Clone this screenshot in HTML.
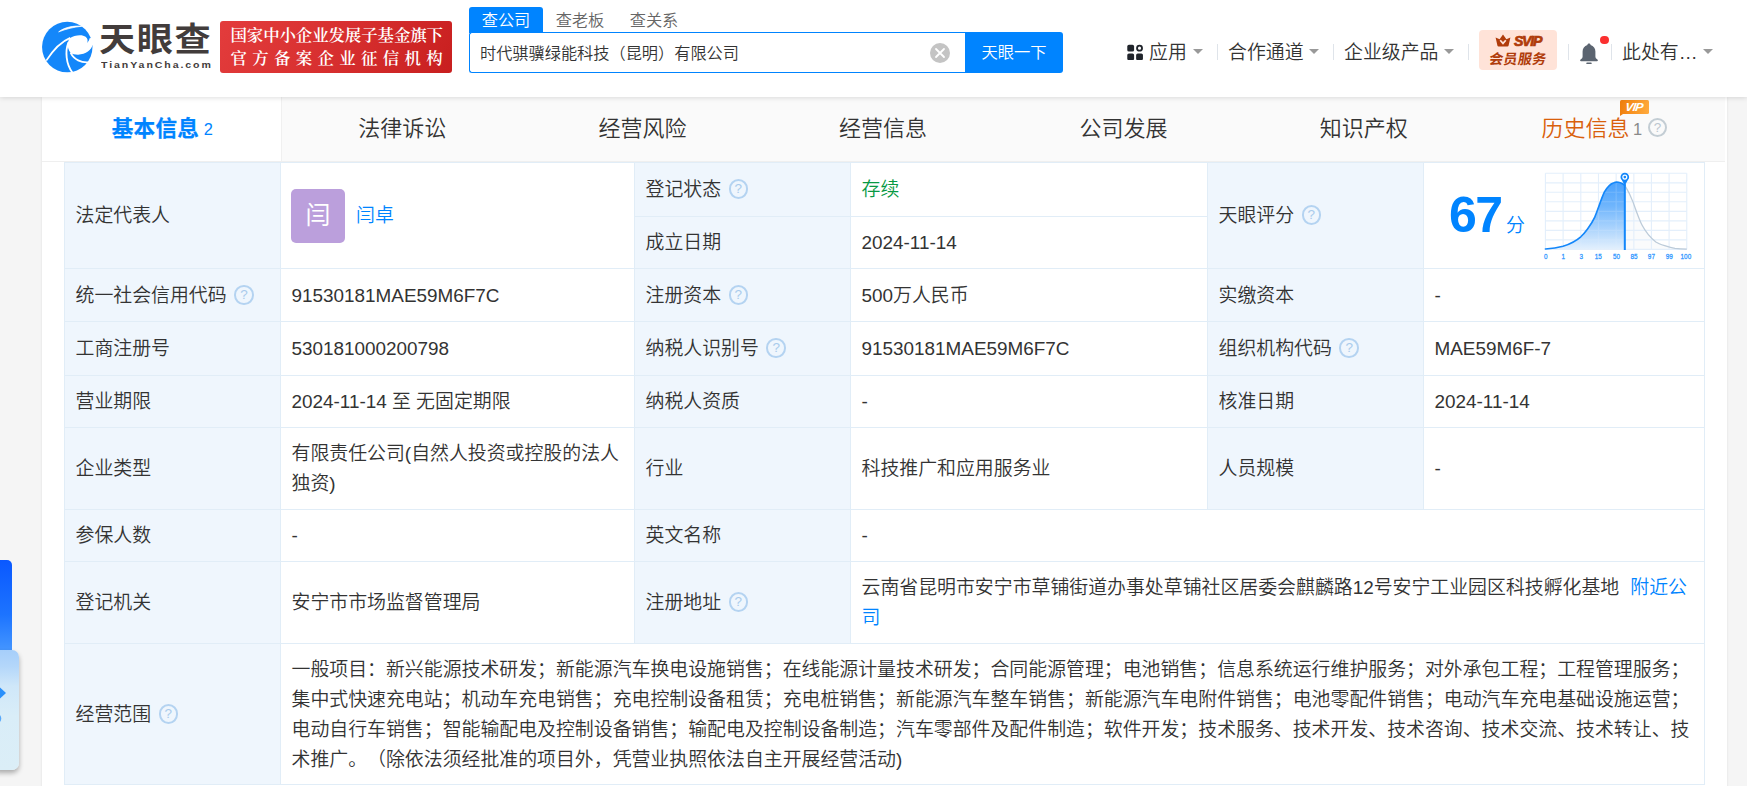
<!DOCTYPE html>
<html lang="zh-CN">
<head>
<meta charset="utf-8">
<title>天眼查</title>
<style>
*{box-sizing:border-box;margin:0;padding:0}
html,body{width:1747px;height:786px;overflow:hidden;background:#f5f5f5}
body{position:relative;text-spacing-trim:space-all;font-family:"Liberation Sans","Noto Sans CJK SC",sans-serif;color:#333;font-size:18.9px}
.abs{position:absolute}
i{font-style:normal}
a{color:#0084ff;text-decoration:none}
/* header */
#hdr{position:absolute;left:0;top:0;width:1747px;height:97px;background:#fff;box-shadow:0 1px 5px rgba(0,0,0,.13);z-index:5}
/* container */
#wrap{position:absolute;left:41.6px;top:97px;width:1685.6px;height:700px;background:#fff;box-shadow:0 0 2.5px rgba(0,0,0,.09)}
#tabs{position:absolute;left:41.6px;top:97px;width:1683px;height:65px;background:#fafafa;border-bottom:1px solid #efefef}
.tab{position:absolute;top:0;height:64px;width:240.4px;text-align:center;line-height:63.5px;font-size:22px;color:#333;white-space:nowrap;font-weight:350}
.tab.on{background:#fff;color:#0084ff;font-weight:bold;height:64px;border-right:1px solid #f0f0f0;letter-spacing:.3px;-webkit-text-stroke:.25px #0084ff;padding-left:2px;font-size:21.6px}
.tab .n{font-size:16.4px;font-weight:normal;margin-left:4.5px;position:relative;top:-1px;letter-spacing:0;-webkit-text-stroke:0}
/* table */
.c{position:absolute;display:flex;align-items:center;padding:1.5px 10px 0 10.5px;font-weight:350;border-left:1px solid #e1edf7;border-top:1px solid #e1edf7;line-height:30px;font-size:18.9px;color:#333}
.l{background:#eff6fd}
.q{display:inline-block;width:19.6px;height:19.6px;border:2px solid #b4d3f1;border-radius:50%;margin-left:7.5px;position:relative;top:-1px;flex:none;line-height:16px;text-align:center;font-size:13.5px;color:#a9cbec;font-family:"Liberation Sans",sans-serif;font-weight:400}
.av{display:block;width:54px;height:54px;border-radius:5px;background:#bb9fdc;color:#fff;font-size:25px;line-height:52px;text-align:center;flex:none;font-weight:400;margin-left:-.5px}
.nm{margin-left:11px}
#lg1{left:99px;top:14.5px;font-size:32px;font-weight:700;color:#423c3b;letter-spacing:1.4px;line-height:48px;white-space:nowrap;transform-origin:0 0;transform:scale(1.13,1.02)}
#lg2{left:101px;top:56.5px;font-size:9.6px;font-weight:bold;color:#423c3b;letter-spacing:1.75px;line-height:16px;white-space:nowrap;font-family:"Liberation Sans",sans-serif;transform-origin:0 0;transform:scale(1.1,1)}
#badge{left:220px;top:21px;width:232px;height:52px;border-radius:3px;background:linear-gradient(120deg,#e33c3c 0%,#d62e2e 55%,#c81f1f 100%);color:#fff;font-family:"Liberation Serif","Noto Serif CJK SC",serif;font-weight:600;font-size:16.45px;white-space:nowrap}
#badge .b1{position:absolute;left:10.5px;top:3px;line-height:24px;letter-spacing:-0.1px}
#badge .b2{position:absolute;left:10.5px;top:26px;line-height:24px;letter-spacing:5.3px}
.stab{top:7.4px;height:25.6px;line-height:26.5px;text-align:center;font-size:16.2px;color:#666;font-weight:350}
.stab.on{background:#0084ff;color:#fff;border-radius:3px 3px 0 0}
#sbox{left:469px;top:32px;width:497px;height:41px;border:1.3px solid #0084ff;border-right:none;border-radius:3px 0 0 3px;background:#fff;font-size:16.2px;color:#333;line-height:40.5px;padding-left:10px;white-space:nowrap;font-weight:350}
#sbtn{left:965px;top:32px;width:98px;height:41px;background:#0084ff;color:#fff;font-size:16.3px;line-height:41px;font-weight:350;text-align:center;border-radius:0 3px 3px 0}
.nav{top:37.5px;line-height:30px;font-size:18.9px;color:#333;white-space:nowrap;font-weight:350}
.car{top:49px;width:0;height:0;border-left:5.2px solid transparent;border-right:5.2px solid transparent;border-top:5.6px solid #999}
.dv{top:44px;width:1.2px;height:16px;background:#dfe4ea}
#svip{left:1479px;top:30px;width:78px;height:40px;border-radius:4px;background:#ffe3d8;color:#b03c0a;text-align:center;white-space:nowrap}
#svip .s1{position:absolute;left:0;top:3px;width:78px;line-height:17px;font-size:14.2px;font-style:italic;letter-spacing:-1.3px;-webkit-text-stroke:.7px #b03c0a}
#svip .s1 b{font-style:italic}
#svip .s2{position:absolute;left:0;top:19.8px;width:78px;line-height:18px;font-size:14px;font-weight:bold;letter-spacing:0.4px;transform:skewX(-9deg)}
.sc1{left:25px;top:22px;font-size:50px;line-height:60px;color:#0084ff;font-weight:bold;font-family:"Liberation Sans",sans-serif;letter-spacing:-1.5px}
.sc2{left:82px;top:48px;font-size:18.9px;line-height:30px;color:#0084ff;font-weight:350}
#fl1{left:0;top:560px;width:11.5px;height:110px;border-radius:0 5px 0 0;background:linear-gradient(180deg,#0a58ff 0%,#1d74ff 50%,#5aa8ff 100%)}
#fl2{left:-8px;top:650px;width:27.3px;height:120px;border-radius:7px;background:linear-gradient(180deg,#a6cefa 0%,#b4d7fa 14%,#cfe7f9 30%,#d9edf8 55%,#dbeef7 100%);box-shadow:0 3px 5px rgba(0,0,0,.3)}
.vip{left:1578px;top:3px;width:29px;height:14px;border-radius:1.5px 1.5px 1.5px 0;background:linear-gradient(100deg,#ee7d0c 0%,#f89322 45%,#ffab3e 100%);color:#fff;font-weight:bold;font-size:11.6px;line-height:14px;text-align:center;font-family:"Liberation Sans",sans-serif;letter-spacing:-0.8px}
.vip i{font-style:italic;display:block;transform:skewX(-8deg) scale(1.05,1);padding-right:1px}
.vip:after{content:"";position:absolute;left:0;top:13.5px;border-top:2.6px solid #ee7d0c;border-right:3.4px solid transparent}
#tabs .q{color:#bcc7cf}
</style>
</head>
<body>
<div id="wrap"></div>
<div id="hdr">
<svg class="abs" style="left:35px;top:15px" width="70" height="65" viewBox="0 0 846 786">
<circle cx="390" cy="388" r="305" fill="#1487fa"/>
<path d="M420 280 C475 242 575 232 612 264 C640 288 640 316 630 338 C646 322 656 302 660 282 L730 270 L730 372 L694 364 C686 420 615 480 520 480 C480 478 452 470 434 462 C405 430 390 384 397 340 C402 312 410 294 420 280Z" fill="#fff"/>
<path d="M286 204 C350 150 470 126 566 136 C470 146 380 168 286 204Z" fill="#fff" stroke="#fff" stroke-width="9" stroke-linejoin="round"/>
<path d="M426 276 C330 316 220 420 136 552" fill="none" stroke="#fff" stroke-width="21"/>
<path d="M404 330 C362 440 374 590 452 696" fill="none" stroke="#fff" stroke-width="22"/>
<path d="M430 456 C470 540 560 582 654 572" fill="none" stroke="#fff" stroke-width="22"/>
</svg>
<div class="abs" id="lg1">天眼查</div>
<div class="abs" id="lg2">TianYanCha.com</div>
<div class="abs" id="badge"><div class="b1">国家中小企业发展子基金旗下</div><div class="b2">官方备案企业征信机构</div></div>
<div class="abs stab on" style="left:469px;width:74px">查公司</div>
<div class="abs stab" style="left:543px;width:74px">查老板</div>
<div class="abs stab" style="left:617px;width:74px">查关系</div>
<div class="abs" id="sbox"><span>时代骐骥绿能科技（昆明）有限公司</span>
<svg class="abs" style="left:459px;top:9px" width="22" height="22" viewBox="0 0 22 22"><circle cx="11" cy="11" r="10" fill="#c4c4c4"/><path d="M7 7L15 15M15 7L7 15" stroke="#fff" stroke-width="1.8" stroke-linecap="round"/></svg>
</div>
<div class="abs" id="sbtn">天眼一下</div>
<svg class="abs" style="left:1126.5px;top:43.7px" width="16.6" height="16.6" viewBox="0 0 17.4 18"><rect x="0" y="0.8" width="7.4" height="7.4" rx="1.8" fill="#20242b"/><rect x="0" y="10.2" width="7.4" height="7.4" rx="1.8" fill="#20242b"/><rect x="9.6" y="10.2" width="7.4" height="7.4" rx="1.8" fill="#20242b"/><circle cx="13.3" cy="4.5" r="2.7" fill="none" stroke="#20242b" stroke-width="2"/></svg>
<div class="abs nav" style="left:1149px">应用</div><i class="abs car" style="left:1193px"></i>
<i class="abs dv" style="left:1217px"></i>
<div class="abs nav" style="left:1228px">合作通道</div><i class="abs car" style="left:1309px"></i>
<i class="abs dv" style="left:1333px"></i>
<div class="abs nav" style="left:1344px">企业级产品</div><i class="abs car" style="left:1444px"></i>
<i class="abs dv" style="left:1468px"></i>
<div class="abs" id="svip"><div class="s1"><svg width="16" height="13" viewBox="0 0 16 13" style="vertical-align:-1px;margin-right:3px"><path d="M0.6 3.4L4.6 5.2 8 0.4 11.4 5.2 15.4 3.4 13.6 11.6Q13.4 12.6 12.4 12.6H3.6Q2.6 12.6 2.4 11.6Z" fill="#b03c0a" stroke="none"/><path d="M5.2 6.2L8 9.4 10.8 6.2" fill="none" stroke="#ffe3d8" stroke-width="1.7"/></svg><b>SVIP</b></div><div class="s2">会员服务</div></div>
<i class="abs dv" style="left:1568px"></i>
<svg class="abs" style="left:1578px;top:42px" width="22" height="24" viewBox="0 0 22 24"><path d="M11 1.6C11.9 1.6 12.5 2.2 12.6 3C15.6 3.8 17.4 6.4 17.4 9.6V14.6C17.4 15.8 18 16.8 19.4 17.6C20.2 18 20 19.2 19 19.2H3C2 19.2 1.8 18 2.6 17.6C4 16.8 4.6 15.8 4.6 14.6V9.6C4.6 6.4 6.4 3.8 9.4 3C9.5 2.2 10.1 1.6 11 1.6Z" fill="#5b6470"/><rect x="8.3" y="20.6" width="5.4" height="1.5" rx=".7" fill="#5b6470"/></svg>
<i class="abs" style="left:1600px;top:35.5px;width:8.5px;height:8.5px;border-radius:50%;background:#fb3030"></i>
<i class="abs dv" style="left:1611px"></i>
<div class="abs nav" style="left:1622px">此处有…</div><i class="abs car" style="left:1703px"></i>
</div>
<div id="tabs">
<div class="tab on" style="left:0">基本信息<span class="n">2</span></div>
<div class="tab" style="left:240.4px">法律诉讼</div>
<div class="tab" style="left:480.8px">经营风险</div>
<div class="tab" style="left:721.2px">经营信息</div>
<div class="tab" style="left:961.6px">公司发展</div>
<div class="tab" style="left:1202.0px">知识产权</div>
<div class="tab" style="left:1442.4px;width:auto;color:#d9600b;padding-left:57.5px;text-align:left">历史信息<span class="n" style="color:#8a8a8a;margin-left:3.5px;display:inline-block;font-size:18.9px;transform:scale(.868);transform-origin:0 62%">1</span></div>
<i class="q" style="position:absolute;left:1606.2px;top:20.8px;margin:0;width:19.5px;height:19.5px;border-color:#c3cdd4">?</i>
<div class="abs vip"><i>VIP</i></div>
</div>
<div id="tbl">
<div class="c l" style="left:64px;top:162px;width:216px;height:106px;">法定代表人</div>
<div class="c" style="left:280px;top:162px;width:354px;height:106px;"><span class="av">闫</span><a class="nm">闫卓</a></div>
<div class="c l" style="left:634px;top:162px;width:216px;height:54px;">登记状态<i class="q">?</i></div>
<div class="c" style="left:850px;top:162px;width:357px;height:54px;"><span style="color:#089944">存续</span></div>
<div class="c l" style="left:634px;top:216px;width:216px;height:52px;">成立日期</div>
<div class="c" style="left:850px;top:216px;width:357px;height:52px;">2024-11-14</div>
<div class="c l" style="left:1207px;top:162px;width:216px;height:106px;">天眼评分<i class="q">?</i></div>
<div class="c" style="left:1423px;top:162px;width:281px;height:106px;border-right:1px solid #e1edf7;width:282px;"><b class="abs sc1">67</b><span class="abs sc2">分</span>
<svg class="abs" style="left:111px;top:2px" width="165" height="100" viewBox="0 0 1297 786">
<defs><linearGradient id="g1" x1="0" y1="0" x2="0" y2="1"><stop offset="0" stop-color="#4ba2fd"/><stop offset=".35" stop-color="#6fb5fc"/><stop offset="1" stop-color="#e3f0fd"/></linearGradient></defs>
<path d="M82 663L706 663L706 160C740 215 755 250 770 290C785 330 815 420 840 470C862 512 905 570 950 605C975 622 1060 650 1100 655C1130 658 1160 660 1193 661L1193 663Z" fill="#fafbfc"/>
<path d="M82 661C110 660 180 652 220 640C250 630 320 600 360 565C385 542 440 475 470 410C490 365 525 255 545 215C558 190 590 150 620 140C630 136 655 136 670 140C685 145 696 152 706 160L706 663L82 663Z" fill="url(#g1)"/>
<g stroke="#e4effb" stroke-width="9" fill="none">
<path d="M82 65V663M221 65V663M360 65V663M499 65V663M638 65V663M777 65V663M915 65V663M1054 65V663M1193 65V663"/>
<path d="M82 65H1193M82 140H1193M82 214.5H1193M82 289H1193M82 364H1193M82 439H1193M82 513.5H1193M82 588H1193M82 663H1193"/>
</g>
<path d="M82 661C110 660 180 652 220 640C250 630 320 600 360 565C385 542 440 475 470 410C490 365 525 255 545 215C558 190 590 150 620 140C630 136 655 136 670 140C685 145 696 152 706 160L706 663L82 663Z" fill="url(#g1)" opacity=".82"/>
<path d="M706 160C740 215 755 250 770 290C785 330 815 420 840 470C862 512 905 570 950 605C975 622 1060 650 1100 655C1130 658 1160 660 1193 661" fill="none" stroke="#bccbd9" stroke-width="10"/>
<path d="M82 660C110 659 180 651 220 639C250 629 320 599 360 564C385 541 440 474 470 409C490 364 525 254 545 214C558 189 590 149 620 139C630 135 655 135 670 139C685 144 696 151 706 159" fill="none" stroke="#1487fa" stroke-width="13" stroke-linecap="round"/>
<path d="M706 150V668" stroke="#1487fa" stroke-width="16"/>
<path d="M706 162L682 118A34 34 0 1 1 730 118Z" fill="#1487fa"/>
<circle cx="706" cy="95" r="20" fill="#fff"/><circle cx="706" cy="95" r="10.5" fill="#1487fa"/>
<g font-family="Liberation Sans, sans-serif" font-size="58" fill="#2f97ff" stroke="#2f97ff" stroke-width="2.2" text-anchor="middle" transform="scale(0.86,1)">
<text x="98.8" y="741">0</text><text x="258.1" y="741">1</text><text x="423.3" y="741">3</text><text x="577.9" y="741">15</text><text x="744.2" y="741">50</text><text x="904.7" y="741">85</text><text x="1064.0" y="741">97</text><text x="1226.7" y="741">99</text><text x="1379.1" y="741">100</text>
</g>
</svg>
</div>
<div class="c l" style="left:64px;top:268px;width:216px;height:53px;">统一社会信用代码<i class="q">?</i></div>
<div class="c" style="left:280px;top:268px;width:354px;height:53px;">91530181MAE59M6F7C</div>
<div class="c l" style="left:634px;top:268px;width:216px;height:53px;">注册资本<i class="q">?</i></div>
<div class="c" style="left:850px;top:268px;width:357px;height:53px;">500万人民币</div>
<div class="c l" style="left:1207px;top:268px;width:216px;height:53px;">实缴资本</div>
<div class="c" style="left:1423px;top:268px;width:281px;height:53px;border-right:1px solid #e1edf7;width:282px;">-</div>
<div class="c l" style="left:64px;top:321px;width:216px;height:54px;">工商注册号</div>
<div class="c" style="left:280px;top:321px;width:354px;height:54px;">530181000200798</div>
<div class="c l" style="left:634px;top:321px;width:216px;height:54px;">纳税人识别号<i class="q">?</i></div>
<div class="c" style="left:850px;top:321px;width:357px;height:54px;">91530181MAE59M6F7C</div>
<div class="c l" style="left:1207px;top:321px;width:216px;height:54px;">组织机构代码<i class="q">?</i></div>
<div class="c" style="left:1423px;top:321px;width:281px;height:54px;border-right:1px solid #e1edf7;width:282px;">MAE59M6F-7</div>
<div class="c l" style="left:64px;top:375px;width:216px;height:52px;">营业期限</div>
<div class="c" style="left:280px;top:375px;width:354px;height:52px;">2024-11-14 至 无固定期限</div>
<div class="c l" style="left:634px;top:375px;width:216px;height:52px;">纳税人资质</div>
<div class="c" style="left:850px;top:375px;width:357px;height:52px;">-</div>
<div class="c l" style="left:1207px;top:375px;width:216px;height:52px;">核准日期</div>
<div class="c" style="left:1423px;top:375px;width:281px;height:52px;border-right:1px solid #e1edf7;width:282px;">2024-11-14</div>
<div class="c l" style="left:64px;top:427px;width:216px;height:82px;">企业类型</div>
<div class="c" style="left:280px;top:427px;width:354px;height:82px;">有限责任公司(自然人投资或控股的法人独资)</div>
<div class="c l" style="left:634px;top:427px;width:216px;height:82px;">行业</div>
<div class="c" style="left:850px;top:427px;width:357px;height:82px;">科技推广和应用服务业</div>
<div class="c l" style="left:1207px;top:427px;width:216px;height:82px;">人员规模</div>
<div class="c" style="left:1423px;top:427px;width:281px;height:82px;border-right:1px solid #e1edf7;width:282px;">-</div>
<div class="c l" style="left:64px;top:509px;width:216px;height:52px;">参保人数</div>
<div class="c" style="left:280px;top:509px;width:354px;height:52px;">-</div>
<div class="c l" style="left:634px;top:509px;width:216px;height:52px;">英文名称</div>
<div class="c" style="left:850px;top:509px;width:854px;height:52px;border-right:1px solid #e1edf7;width:855px;">-</div>
<div class="c l" style="left:64px;top:561px;width:216px;height:82px;">登记机关</div>
<div class="c" style="left:280px;top:561px;width:354px;height:82px;">安宁市市场监督管理局</div>
<div class="c l" style="left:634px;top:561px;width:216px;height:82px;">注册地址<i class="q">?</i></div>
<div class="c" style="left:850px;top:561px;width:854px;height:82px;border-right:1px solid #e1edf7;width:855px;"><span>云南省昆明市安宁市草铺街道办事处草铺社区居委会麒麟路12号安宁工业园区科技孵化基地<a style="margin-left:11px">附近公司</a></span></div>
<div class="c l" style="left:64px;top:643px;width:216px;height:141px;border-bottom:1px solid #e1edf7;height:142px;">经营范围<i class="q">?</i></div>
<div class="c" style="left:280px;top:643px;width:1424px;height:141px;border-right:1px solid #e1edf7;border-bottom:1px solid #e1edf7;width:1425px;height:142px;"><span>一般项目：新兴能源技术研发；新能源汽车换电设施销售；在线能源计量技术研发；合同能源管理；电池销售；信息系统运行维护服务；对外承包工程；工程管理服务；集中式快速充电站；机动车充电销售；充电控制设备租赁；充电桩销售；新能源汽车整车销售；新能源汽车电附件销售；电池零配件销售；电动汽车充电基础设施运营；电动自行车销售；智能输配电及控制设备销售；输配电及控制设备制造；汽车零部件及配件制造；软件开发；技术服务、技术开发、技术咨询、技术交流、技术转让、技术推广。（除依法须经批准的项目外，凭营业执照依法自主开展经营活动)</span></div>
</div>
<div class="abs" id="fl1"></div>
<div class="abs" id="fl2"><svg class="abs" style="left:8px;top:30px" width="12" height="50" viewBox="0 0 12 50"><path d="M0 7.5L6 13L0 18.5Z" fill="#2a90fb"/><path d="M0 35Q2.6 38.5 0 42Z" fill="#57a8fb"/></svg></div>
</body>
</html>
